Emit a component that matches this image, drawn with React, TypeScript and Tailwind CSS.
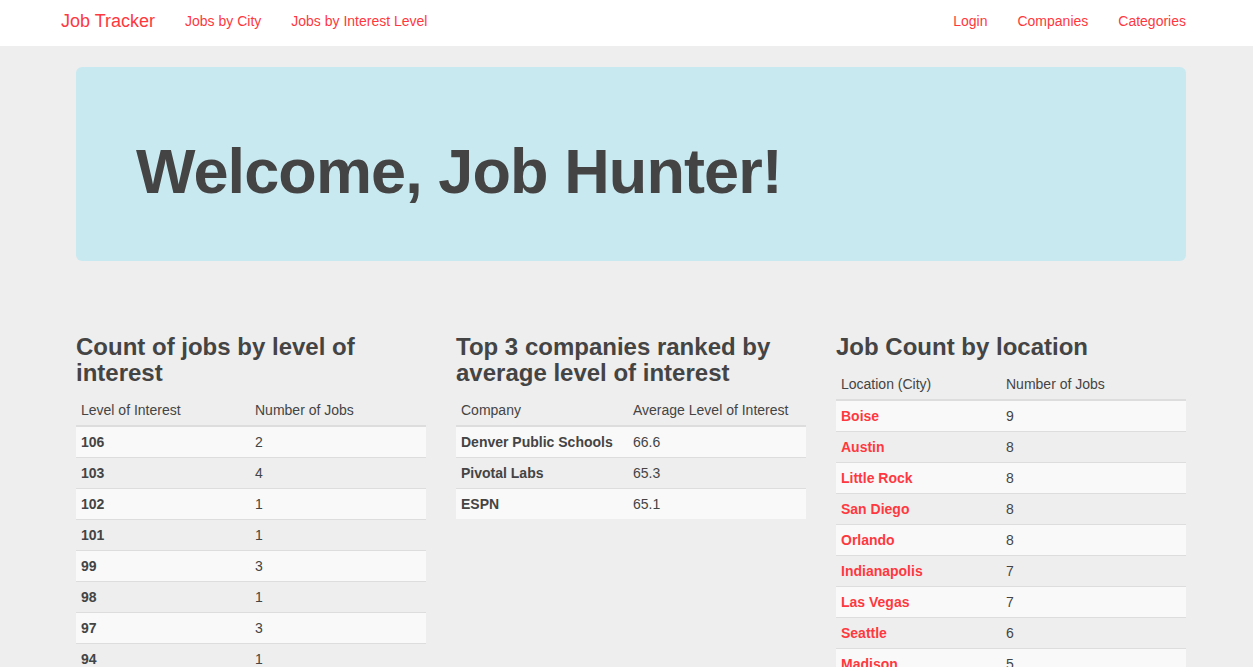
import React from "react";

const interestRows: [string, string][] = [
  ["106", "2"],
  ["103", "4"],
  ["102", "1"],
  ["101", "1"],
  ["99", "3"],
  ["98", "1"],
  ["97", "3"],
  ["94", "1"],
  ["90", "2"],
];

const companyRows: [string, string][] = [
  ["Denver Public Schools", "66.6"],
  ["Pivotal Labs", "65.3"],
  ["ESPN", "65.1"],
];

const cityRows: [string, string][] = [
  ["Boise", "9"],
  ["Austin", "8"],
  ["Little Rock", "8"],
  ["San Diego", "8"],
  ["Orlando", "8"],
  ["Indianapolis", "7"],
  ["Las Vegas", "7"],
  ["Seattle", "6"],
  ["Madison", "5"],
  ["Denver", "5"],
];

function DataTable({
  cols,
  rows,
  firstWidth,
  linkFirst,
}: {
  cols: [string, string];
  rows: [string, string][];
  firstWidth: string;
  linkFirst?: boolean;
}) {
  return (
    <table className="w-full border-collapse text-[14px] leading-[20px]">
      <thead>
        <tr>
          <th className={`${firstWidth} px-[5px] py-[5px] text-left font-normal border-b-2 border-[#dddddd]`}>
            {cols[0]}
          </th>
          <th className="px-[5px] py-[5px] text-left font-normal border-b-2 border-[#dddddd]">
            {cols[1]}
          </th>
        </tr>
      </thead>
      <tbody>
        {rows.map(([a, b], i) => (
          <tr key={a} className={i % 2 === 0 ? "bg-[#f9f9f9]" : ""}>
            <td
              className={`px-[5px] py-[5px] font-bold ${i > 0 ? "border-t border-[#dddddd]" : ""} ${
                linkFirst ? "text-[#ff3840]" : ""
              }`}
            >
              {a}
            </td>
            <td className={`px-[5px] py-[5px] ${i > 0 ? "border-t border-[#dddddd]" : ""}`}>{b}</td>
          </tr>
        ))}
      </tbody>
    </table>
  );
}

export default function App() {
  return (
    <div
      className="min-h-screen bg-[#eeeeee] text-[#444444]"
      style={{ fontFamily: '"Liberation Sans", Arial, sans-serif' }}
    >
      {/* Navbar */}
      <nav className="h-[46px] bg-white">
        <div className="ml-[61px] flex h-full w-[1125px] items-center pb-[4px] text-[#ff3840]">
          <span className="text-[18px] leading-[24px] pr-[30px]">Job Tracker</span>
          <span className="text-[14px] leading-[20px] pr-[30px]">Jobs by City</span>
          <span className="text-[14px] leading-[20px]">Jobs by Interest Level</span>
          <div className="ml-auto flex gap-[30px] text-[14px] leading-[20px]">
            <span>Login</span>
            <span>Companies</span>
            <span>Categories</span>
          </div>
        </div>
      </nav>

      <div className="ml-[76px] w-[1110px] pt-[21px]">
        {/* Jumbotron */}
        <div className="h-[194px] rounded-[6px] bg-[#c9e9f1] px-[60px] pt-[70px]">
          <h1 className="text-[63px] leading-[69px] font-bold tracking-[-0.9px] text-[#444444]">
            Welcome, Job Hunter!
          </h1>
        </div>

        {/* Tables */}
        <div className="mt-[73px] grid grid-cols-3 gap-[30px]">
          <div>
            <h3 className="mb-[9px] text-[24px] leading-[26px] font-bold">
              Count of jobs by level of interest
            </h3>
            <DataTable
              cols={["Level of Interest", "Number of Jobs"]}
              rows={interestRows}
              firstWidth="w-[174px]"
            />
          </div>
          <div>
            <h3 className="mb-[9px] text-[24px] leading-[26px] font-bold">
              Top 3 companies ranked by average level of interest
            </h3>
            <DataTable
              cols={["Company", "Average Level of Interest"]}
              rows={companyRows}
              firstWidth="w-[172px]"
            />
          </div>
          <div>
            <h3 className="mb-[9px] text-[24px] leading-[26px] font-bold">
              Job Count by location
            </h3>
            <DataTable
              cols={["Location (City)", "Number of Jobs"]}
              rows={cityRows}
              firstWidth="w-[165px]"
              linkFirst
            />
          </div>
        </div>
      </div>
    </div>
  );
}
